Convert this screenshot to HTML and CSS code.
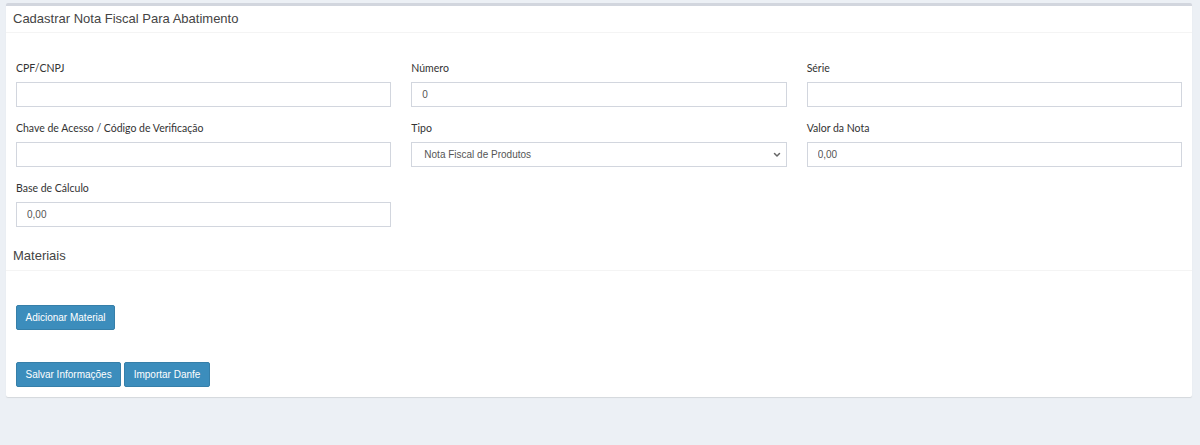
FILE: index.html
```html
<!DOCTYPE html>
<html lang="pt-BR">
<head>
<meta charset="utf-8">
<title>Cadastrar Nota Fiscal Para Abatimento</title>
<link rel="stylesheet" href="styles.css">
</head>
<body>
<div class="wrapper">
  <div class="box">
    <div class="box-header">
      <h3 class="box-title">Cadastrar Nota Fiscal Para Abatimento</h3>
    </div>
    <div class="box-body">
      <div class="grid">
        <div class="form-group">
          <label>CPF/CNPJ</label>
          <input class="form-control" type="text" value="">
        </div>
        <div class="form-group">
          <label>Número</label>
          <input class="form-control" type="text" value="0">
        </div>
        <div class="form-group">
          <label>Série</label>
          <input class="form-control" type="text" value="">
        </div>
        <div class="form-group">
          <label>Chave de Acesso / Código de Verificação</label>
          <input class="form-control" type="text" value="">
        </div>
        <div class="form-group">
          <label>Tipo</label>
          <div class="select-wrap">
            <select class="form-control select">
              <option>Nota Fiscal de Produtos</option>
              <option>Nota Fiscal de Serviços</option>
            </select>
            <svg class="caret" width="8" height="6" viewBox="0 0 8 6" aria-hidden="true">
              <path d="M1.5 1.5 L4 4 L6.5 1.5" fill="none" stroke="#666" stroke-width="1.5" stroke-linecap="round" stroke-linejoin="round"/>
            </svg>
          </div>
        </div>
        <div class="form-group">
          <label>Valor da Nota</label>
          <input class="form-control" type="text" value="0,00">
        </div>
        <div class="form-group">
          <label>Base de Cálculo</label>
          <input class="form-control" type="text" value="0,00">
        </div>
      </div>
    </div>
    <div class="section-header">
      <h3 class="section-title">Materiais</h3>
    </div>
    <div class="materials">
      <button class="btn" type="button">Adicionar Material</button>
    </div>
    <div class="actions">
      <button class="btn" type="button">Salvar Informações</button>
      <button class="btn" type="button">Importar Danfe</button>
    </div>
  </div>
</div>
</body>
</html>
```
FILE: styles.css
```css
html, body {
  margin: 0;
  padding: 0;
  background: #ecf0f5;
  height: 100%;
}
body {
  font-family: "Liberation Sans", Arial, sans-serif;
  color: #333;
}
.wrapper {
  padding: 3px 8px 0 6px;
}
.box {
  background: #fff;
  border-top: 3px solid #d2d6de;
  border-radius: 2px;
  box-shadow: 0 1px 1px rgba(0, 0, 0, 0.1);
  padding-bottom: 10px;
}
.box-header {
  padding: 6px 7px 7px;
  border-bottom: 1px solid #f4f4f4;
}
.box-title {
  margin: 0;
  font-size: 13px;
  line-height: 13px;
  font-weight: normal;
  color: #444;
}
.box-body {
  padding-top: 28px;
}
.grid {
  display: grid;
  grid-template-columns: repeat(3, 1fr);
}
.form-group {
  padding: 0 10px;
  margin-bottom: 14px;
}
.form-group label {
  display: block;
  font-family: "Lato", "Liberation Sans", sans-serif;
  font-size: 10.5px;
  font-weight: normal;
  line-height: 14px;
  margin-bottom: 7px;
  color: #333;
}
.form-control {
  display: block;
  box-sizing: border-box;
  width: 100%;
  height: 25px;
  margin: 0;
  padding: 0 10px;
  border: 1px solid #d2d6de;
  border-radius: 0;
  font-family: "Liberation Sans", Arial, sans-serif;
  font-size: 10px;
  color: #555;
  background: #fff;
  outline: none;
}
.select-wrap {
  position: relative;
}
.select {
  -webkit-appearance: none;
  appearance: none;
  padding: 0 10px 0 12px;
}
.caret {
  position: absolute;
  right: 6px;
  top: 10px;
  pointer-events: none;
}
.section-header {
  padding: 7px 7px 6px;
  border-bottom: 1px solid #f4f4f4;
}
.section-title {
  margin: 0;
  font-size: 13px;
  line-height: 16px;
  font-weight: normal;
  color: #444;
}
.materials {
  padding: 34px 10px 0;
}
.actions {
  display: flex;
  gap: 3px;
  padding: 32px 10px 0;
}
.btn {
  display: inline-block;
  height: 25px;
  padding: 0 8.5px;
  background: #3c8dbc;
  border: 1px solid #367fa9;
  border-radius: 2px;
  color: #fff;
  font-family: "Liberation Sans", Arial, sans-serif;
  font-size: 10px;
  line-height: 23px;
  cursor: pointer;
}
```
